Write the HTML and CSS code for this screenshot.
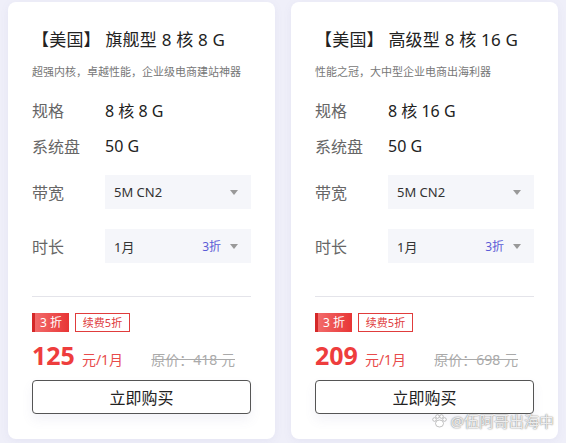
FILE: index.html
```html
<!DOCTYPE html>
<html lang="zh-CN">
  <head>
    <meta charset="UTF-8" />
    <meta name="viewport" content="width=device-width, initial-scale=1.0" />
    <title>云服务器套餐</title>
    <link rel="stylesheet" href="styles.css">
  </head>
  <body>
    <div class="plans">
      <div class="plan">
        <div class="plan-title">【美国】 旗舰型 8 核 8 G</div>
        <div class="plan-desc">超强内核，卓越性能，企业级电商建站神器</div>
        <div class="spec">
          <div class="label">规格</div>
          <div class="value">8 核 8 G</div>
        </div>
        <div class="spec">
          <div class="label">系统盘</div>
          <div class="value">50 G</div>
        </div>
        <div class="option">
          <div class="label">带宽</div>
          <div class="select">
            <span>5M CN2</span>
            <i class="arrow"></i>
          </div>
        </div>
        <div class="option">
          <div class="label">时长</div>
          <div class="select">
            <span>1月</span>
            <em class="discount">3折</em>
            <i class="arrow"></i>
          </div>
        </div>
        <div class="divider"></div>
        <div class="tags">
          <span class="tag-main">3 折</span>
          <span class="tag-line">续费5折</span>
        </div>
        <div class="price">
          <span class="amount">125</span>
          <span class="unit">元/1月</span>
          <span class="origin">原价：418 元</span>
        </div>
        <button class="buy">立即购买</button>
      </div>

      <div class="plan">
        <div class="plan-title">【美国】 高级型 8 核 16 G</div>
        <div class="plan-desc">性能之冠，大中型企业电商出海利器</div>
        <div class="spec">
          <div class="label">规格</div>
          <div class="value">8 核 16 G</div>
        </div>
        <div class="spec">
          <div class="label">系统盘</div>
          <div class="value">50 G</div>
        </div>
        <div class="option">
          <div class="label">带宽</div>
          <div class="select">
            <span>5M CN2</span>
            <i class="arrow"></i>
          </div>
        </div>
        <div class="option">
          <div class="label">时长</div>
          <div class="select">
            <span>1月</span>
            <em class="discount">3折</em>
            <i class="arrow"></i>
          </div>
        </div>
        <div class="divider"></div>
        <div class="tags">
          <span class="tag-main">3 折</span>
          <span class="tag-line">续费5折</span>
        </div>
        <div class="price">
          <span class="amount">209</span>
          <span class="unit">元/1月</span>
          <span class="origin">原价：698 元</span>
        </div>
        <button class="buy">立即购买</button>
        <div class="mark">
          <svg width="15" height="14" viewBox="0 0 15 14">
            <ellipse cx="7.5" cy="9.5" rx="4" ry="3.5" />
            <circle cx="2.5" cy="5.5" r="1.8" />
            <circle cx="5.5" cy="2.5" r="1.8" />
            <circle cx="9.5" cy="2.5" r="1.8" />
            <circle cx="12.5" cy="5.5" r="1.8" />
          </svg>
          @伍阿哥出海中
        </div>
      </div>
    </div>
  </body>
</html>
```

FILE: styles.css
```css
* {
  box-sizing: border-box;
}
body {
  margin: 0;
  background: #efeff9;
  font-family: "Noto Sans", "Noto Sans CJK SC", sans-serif;
  color: #222;
}
.plans {
  display: flex;
  gap: 16px;
  padding: 2px 8px 4px;
}
.plan {
  position: relative;
  width: 267px;
  height: 437px;
  background: #fff;
  border-radius: 8px;
  box-shadow: 0 2px 8px rgba(120, 120, 180, 0.08);
  padding: 24px 24px 24px;
}
.plan-title {
  font-size: 17px;
  line-height: 28px;
  white-space: nowrap;
  letter-spacing: 0.2px;
}
.plan-desc {
  margin: 8px 0 10px;
  font-size: 11px;
  line-height: 20px;
  color: #777;
  white-space: nowrap;
}
.spec,
.option {
  display: flex;
  align-items: center;
}
.spec {
  height: 36px;
}
.label {
  width: 73px;
  flex-shrink: 0;
  font-size: 16px;
  color: #666;
}
.value {
  font-size: 16px;
  color: #222;
}
.option {
  height: 34px;
  margin-top: 11px;
}
.option + .option {
  margin-top: 20px;
}
.select {
  flex: 1;
  height: 34px;
  display: flex;
  align-items: center;
  background: #f5f6fa;
  padding: 0 13px 0 9px;
  font-size: 13px;
  color: #333;
}
.select span {
  flex: 1;
}
.discount {
  font-style: normal;
  color: #5b5bd6;
  font-size: 12px;
  margin-right: 9px;
}
.arrow {
  width: 0;
  height: 0;
  border-left: 4px solid transparent;
  border-right: 4px solid transparent;
  border-top: 5px solid #999;
}
.divider {
  margin-top: 33px;
  height: 1px;
  background: #e4e4ea;
}
.tags {
  display: flex;
  gap: 6px;
  margin-top: 16px;
  height: 19px;
}
.tag-main {
  width: 37px;
  line-height: 19px;
  font-size: 12px;
  color: #fff;
  background: linear-gradient(90deg, #f26a6a, #e83535);
  border-left: 3px solid #d42828;
  padding-left: 5px;
}
.tag-line {
  width: 55px;
  line-height: 17px;
  font-size: 11px;
  color: #e03c3c;
  border: 1px solid #e03c3c;
  text-align: center;
}
.price {
  display: flex;
  align-items: baseline;
  margin-top: 6px;
  height: 30px;
}
.amount {
  font-size: 25px;
  font-weight: 700;
  color: #ee3d3d;
  margin-right: 7px;
}
.unit {
  font-size: 14px;
  color: #e84b4b;
}
.origin {
  margin-left: auto;
  margin-right: 16px;
  font-size: 14px;
  color: #aaa;
  text-decoration: line-through;
}
.buy {
  display: block;
  width: 100%;
  height: 34px;
  margin-top: 12px;
  background: #fff;
  border: 1.5px solid #555;
  border-radius: 4px;
  font-family: inherit;
  font-size: 16px;
  color: #222;
  box-shadow: 0 6px 12px rgba(100, 100, 160, 0.08);
}
.mark {
  position: absolute;
  right: 4px;
  bottom: 8px;
  display: flex;
  align-items: center;
  gap: 4px;
  font-size: 15px;
  color: rgba(255, 255, 255, 0.85);
  text-shadow: 0 0 1px #888, 0 0 2px #999;
}
.mark svg {
  fill: rgba(255, 255, 255, 0.85);
  stroke: #999;
  stroke-width: 0.6;
}
```
